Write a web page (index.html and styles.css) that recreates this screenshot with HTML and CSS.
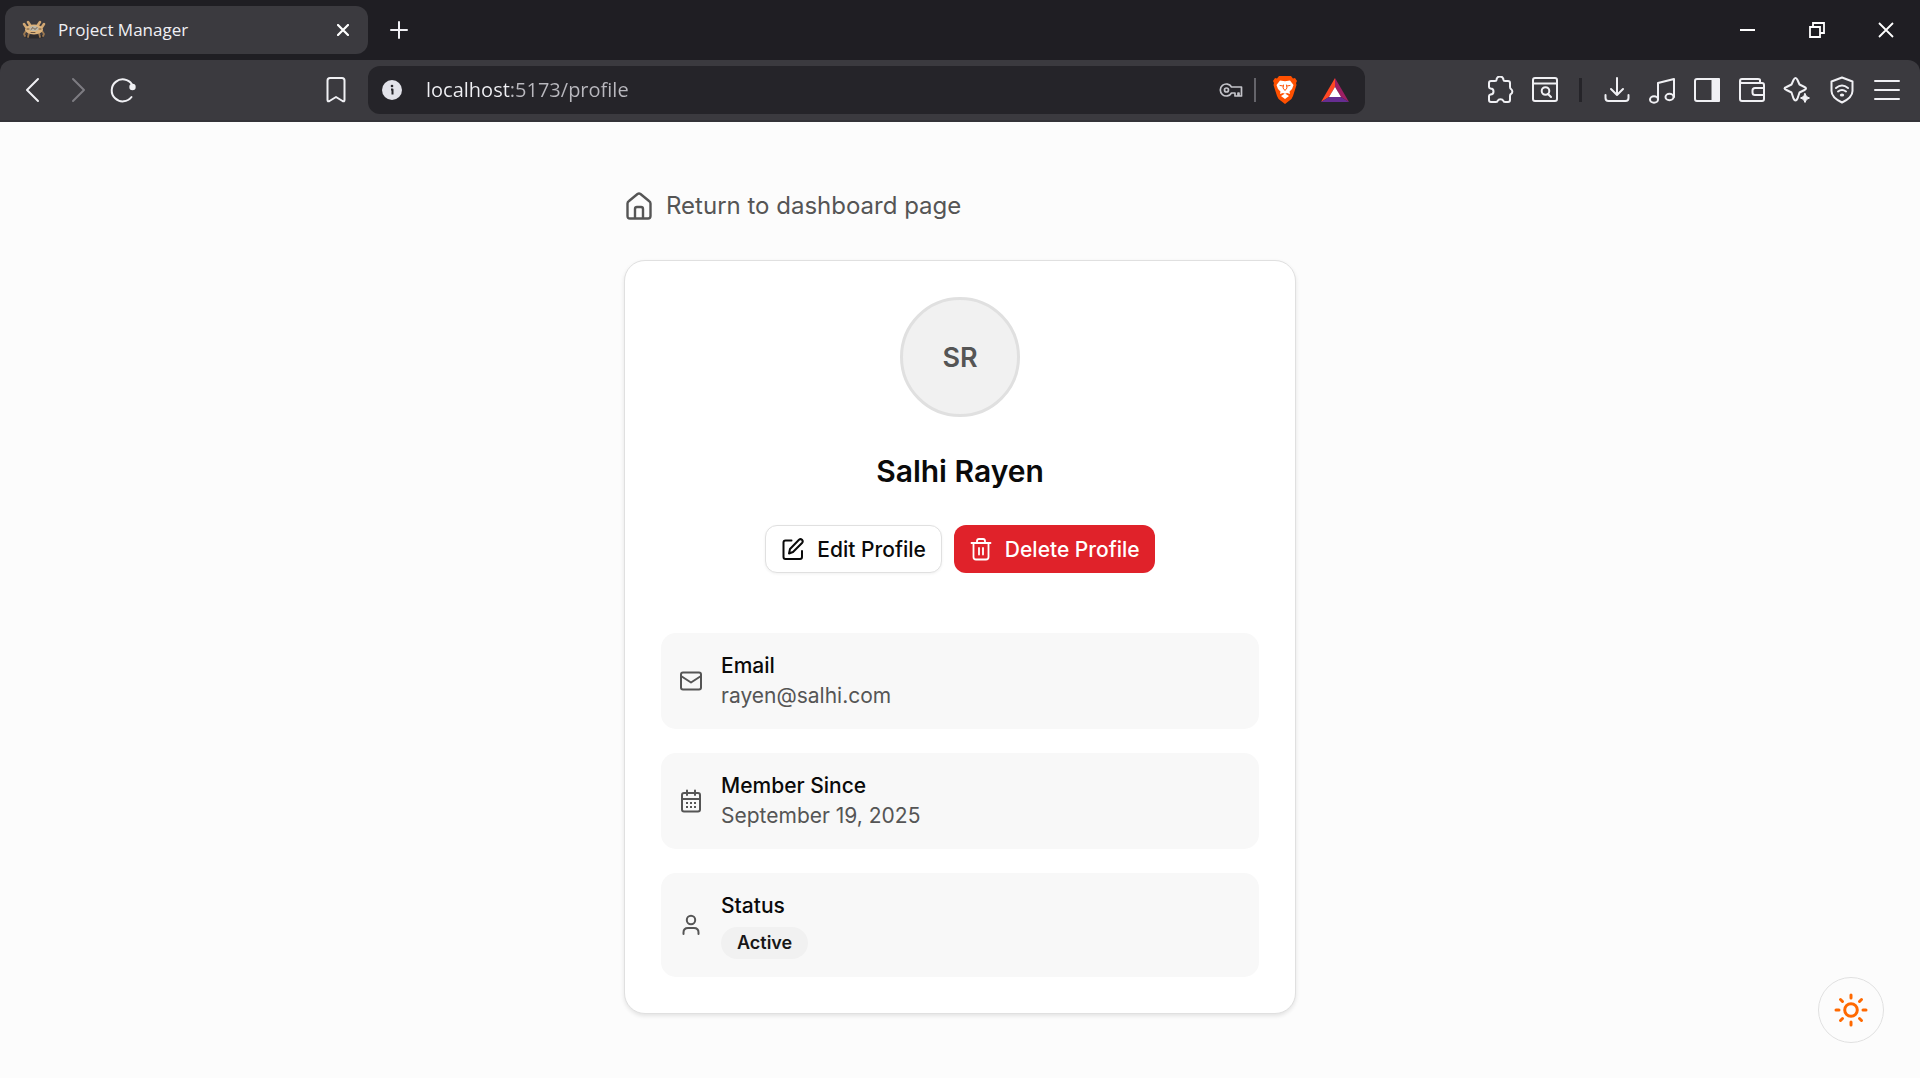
FILE: index.html
```html
<!DOCTYPE html>
<html lang="en">
<head>
<meta charset="utf-8">
<meta name="viewport" content="width=device-width, initial-scale=1">
<title>Project Manager</title>
<link rel="stylesheet" href="styles.css">
</head>
<body>
<div class="window">
  <header class="browser">
    <div class="tabstrip">
      <div class="tab">
        <svg class="favicon" width="24" height="20" viewBox="0 0 24 20" aria-hidden="true">
          <ellipse cx="12" cy="16.500" rx="10" ry="2" fill="#2c2a2c" stroke="none"/>
          <path d="M4 11l-2 3 1 2M20 11l2 3-1 2M7 13l-1 4M17 13l1 4" fill="none" stroke="#9c7850" stroke-width="1.800"/>
          <path d="M4 7L2 4M20 7l2-3M8 5L6 2M16 5l2-3" fill="none" stroke="#d1a773" stroke-width="2.600"/>
          <ellipse cx="12" cy="9.500" rx="9" ry="5" fill="#dcb37c" stroke="none"/>
          <ellipse cx="12" cy="8.500" rx="4.500" ry="2.500" fill="#b9b7ab" stroke="none"/>
          <path d="M9 9.500l2-2 2 2 2-2M5 9h2M17 9h2M9 12.500h4" fill="none" stroke="#6d5540" stroke-width="1"/>
        </svg>
        <span class="tab-title">Project Manager</span>
        <button class="tab-button" aria-label="Close tab"><svg width="12" height="12" viewBox="0 0 12 12"><path d="M1 1l10 10M11 1L1 11" stroke-width="2.200"/></svg></button>
      </div>
      <button class="tab-button" aria-label="New tab"><svg width="18" height="18" viewBox="0 0 18 18"><path d="M9 1v16M1 9h16" stroke-width="2"/></svg></button>
      <div class="window-controls">
        <button aria-label="Minimize"><svg width="16" height="16" viewBox="0 0 16 16"><path d="M0 8h15" stroke-width="2"/></svg></button>
        <button aria-label="Restore"><svg width="16" height="16" viewBox="0 0 16 16"><path d="M1 5h10v10H1zM4 5V1h11v10h-4" stroke-width="1.800" stroke-linejoin="miter"/></svg></button>
        <button aria-label="Close"><svg width="16" height="16" viewBox="0 0 16 16"><path d="M1 1l14 14M15 1L1 15" stroke-width="1.800"/></svg></button>
      </div>
    </div>
    <div class="toolbar">
      <div class="tools">
        <button aria-label="Back"><svg width="28" height="28" viewBox="0 0 28 28"><path d="M19 3L8 14l11 11"/></svg></button>
        <button class="disabled" aria-label="Forward" disabled><svg width="28" height="28" viewBox="0 0 28 28"><path d="M9 3l11 11L9 25"/></svg></button>
        <button aria-label="Reload"><svg width="28" height="28" viewBox="0 0 28 28"><path d="M22.500 21A11 11 0 1 1 23 8.500"/><circle cx="23.500" cy="11" r="3.200" fill="#f0f0f4" stroke="none"/></svg></button>
      </div>
      <div class="space-left"></div>
      <div class="tools">
        <button aria-label="Bookmark this page"><svg width="28" height="28" viewBox="0 0 28 28"><path d="M5.500 24V4.500Q5.500 2 8 2h12q2.500 0 2.500 2.500V24q0 2-2 1L14 21l-6.500 4q-2 1-2-1z"/></svg></button>
      </div>
      <div class="omnibox">
        <svg width="20" height="20" viewBox="0 0 20 20" aria-hidden="true"><circle cx="10" cy="10" r="10" fill="#e2e2e9" stroke="none"/><path d="M9 9.500h1.500v5" stroke="#252429" stroke-linecap="butt"/><circle cx="10" cy="6" r="1.300" fill="#252429" stroke="none"/></svg>
        <input class="address" type="text" value="localhost:5173/profile" aria-label="Address" spellcheck="false">
        <button class="omni-key" aria-label="Passwords"><svg width="24" height="18" viewBox="0 0 24 18"><path d="M12.500 6A6 6 0 1 0 12.500 12H16v3h3v-3h1v3h2.500V6z" stroke="#c3c3c9" stroke-width="1.700"/><circle cx="7.500" cy="9" r="2" stroke="#c3c3c9" stroke-width="1.700"/></svg></button>
        <span class="omni-divider"></span>
        <button class="omni-app" aria-label="Brave Shields"><svg width="24" height="28" viewBox="0 0 24 28"><path d="M6 0h12l2 2.500 2-.5 2 3-1 2 .5 2L20 20q-1 3-3.500 4.500L12 28l-4.500-3.500Q5 23 4 20L.5 9 1 7 0 5l2-3 2 .5z" fill="#ff5000" stroke="none"/><path d="M7 4.500l5 .8 5-.8 3.500 4.500-1.500 4-2.500 2.500.5 2.500-3-1-2 1-2-1-3 1 .5-2.500L5 13 3.500 9zM8 20l4-2.500 4 2.500-4 3z" fill="#fff" stroke="none"/><path d="M7 9.500l3 .5M17 9.500l-3 .5M10.500 9l-.5 3 2 2.500 2-2.500-.5-3" stroke="#ff5000" stroke-width="1"/></svg></button>
        <button class="omni-app" aria-label="Brave Rewards"><svg width="28" height="24" viewBox="0 0 28 24"><path d="M14 0L0 24l8-5 6-10z" fill="#ff4724" stroke="none"/><path d="M14 0l14 24-8-5-6-10z" fill="#9e1f63" stroke="none"/><path d="M0 24h28l-8-5H8z" fill="#662d91" stroke="none"/><path d="M14 9l6 10H8z" fill="#fff" stroke="none"/></svg></button>
      </div>
      <div class="space-right"></div>
      <div class="tools">
        <button aria-label="Extensions"><svg width="28" height="28" viewBox="0 0 28 28"><path d="M9 5q1.500 0 1.500-1a3.500 3.500 0 0 1 7 0q0 1 1.500 1h3q2 0 2 2v4q0 1.500 1 2a3 3 0 0 1 0 5q-1 .5-1 2v4q0 2-2 2h-3q-1.500 0-1.500-1a3.500 3.500 0 0 0-6 0q0 1-1.500 1H5q-2 0-2-2v-4q0-1 1.500-1.500a3 3 0 0 0 0-6Q3 12 3 11V7q0-2 2-2z"/></svg></button>
        <button aria-label="Search tabs"><svg width="28" height="28" viewBox="0 0 28 28"><rect x="2" y="2" width="24" height="23" rx="2"/><path d="M2 7.500h24M17 18l3 3"/><circle cx="14.500" cy="15" r="3.800"/></svg></button>
        <span class="tool-divider"></span>
        <button aria-label="Downloads"><svg width="28" height="28" viewBox="0 0 28 28"><path d="M14 2v17M8 13l6 6 6-6M2.500 19v3q0 3 3 3h17q3 0 3-3v-3"/></svg></button>
        <button aria-label="Media"><svg width="28" height="28" viewBox="0 0 28 28"><path d="M10 23V7l16-4v18"/><ellipse cx="6" cy="23.500" rx="4" ry="3.200"/><ellipse cx="21.500" cy="21" rx="4" ry="3.200"/></svg></button>
        <button aria-label="Side panel"><svg width="28" height="28" viewBox="0 0 28 28"><rect x="2" y="3" width="24" height="22" rx="2"/><path d="M19.500 3H26v22h-6.500z" fill="#f0f0f4"/></svg></button>
        <button aria-label="Wallet"><svg width="28" height="28" viewBox="0 0 28 28"><path d="M22 6V4q0-1-2-1H4Q2 3 2 5v18q0 2 2 2h20q2 0 2-2V9q0-2-2-2H4Q2 7 2 5M26 12h-9q-2.500 0-2.500 2.500v2Q14.500 19 17 19h9"/></svg></button>
        <button aria-label="AI assistant"><svg width="28" height="28" viewBox="0 0 28 28"><path d="M10.500 4q2-4 4 0l2 4.500 5 2.500q3 1.500 0 3l-5 2.500-2 6q-2 4-4 0l-2-6-5-2.500q-4-1.500 0-3l5-2.500z"/><path d="M22 17.500l1.500 3 3 1.500-3 1.500-1.500 3-1.500-3-3-1.500 3-1.500z" fill="#f0f0f4" stroke-width="1"/></svg></button>
        <button aria-label="VPN"><svg width="28" height="28" viewBox="0 0 28 28"><path d="M14 1.500l10.500 4V15q0 6.500-10.500 11.500Q3.500 21.500 3.500 15V5.500zM8 12q6-5 12 0M10 15.500q4-3 8 0"/><ellipse cx="14" cy="19" rx="2.200" ry="1.500" fill="#f0f0f4" stroke="none"/></svg></button>
        <button aria-label="Menu"><svg width="28" height="28" viewBox="0 0 28 28"><path d="M2 5h24M2 14h24M2 23h24"/></svg></button>
      </div>
    </div>
  </header>

  <main class="page">
    <div class="profile">
      <a class="return" href="#dashboard">
        <svg width="28" height="28" viewBox="0 0 28 28" aria-hidden="true"><path d="M2.500 11.500Q2.500 10 4 9l8.500-7q1.500-1 3 0L24 9q1.500 1 1.500 2.500V24q0 2.500-2.500 2.500H5Q2.500 26.500 2.500 24zM10 26V17q0-2 2-2h4q2 0 2 2v9" stroke-width="2.400"/></svg>
        Return to dashboard page
      </a>
      <section class="card">
        <div class="avatar">SR</div>
        <h1 class="name">Salhi Rayen</h1>
        <div class="actions">
          <button class="button edit"><svg width="24" height="24" viewBox="0 0 24 24" aria-hidden="true"><path d="M10.500 3.500H4.500Q2.500 3.500 2.500 5.500V20q0 2 2 2H19q2 0 2-2v-6M8 16.500l1-4.500 9-9.200q1.500-1.300 3 0 1.500 1.600 0 3.200L12 15z"/></svg>Edit Profile</button>
          <button class="button delete"><svg width="24" height="24" viewBox="0 0 24 24" aria-hidden="true"><path d="M2.500 6h19M8 6V4q0-2 2-2h4q2 0 2 2v2M4.500 6v14q0 2.500 2.500 2.500h10q2.500 0 2.500-2.500V6M10 11v6.500M14 11v6.500" stroke-width="1.800"/></svg>Delete Profile</button>
        </div>
        <dl class="details">
          <div class="detail">
            <svg width="24" height="24" viewBox="0 0 24 24" aria-hidden="true"><rect x="2" y="3.500" width="20" height="17" rx="2"/><path d="M2 7l10 6.500L22 7"/></svg>
            <div><dt>Email</dt><dd>rayen@salhi.com</dd></div>
          </div>
          <div class="detail">
            <svg width="24" height="24" viewBox="0 0 24 24" aria-hidden="true"><rect x="3" y="4" width="18" height="18.500" rx="2"/><path d="M3 10h18M8 1.500V6M16 1.500V6"/><path d="M7 14h2M11 14h2M15 14h2M7 18h2M11 18h2M15 18h2" stroke-linecap="butt"/></svg>
            <div><dt>Member Since</dt><dd>September 19, 2025</dd></div>
          </div>
          <div class="detail">
            <svg width="24" height="24" viewBox="0 0 24 24" aria-hidden="true"><circle cx="12" cy="7" r="4.200"/><path d="M4.500 21v-1.500Q4.500 15 9 15h6q4.500 0 4.500 4.500V21"/></svg>
            <div><dt>Status</dt><dd class="status"><span class="badge">Active</span></dd></div>
          </div>
        </dl>
      </section>
    </div>
  </main>
  <button class="theme" aria-label="Toggle theme"><svg width="36" height="36" viewBox="0 0 36 36"><circle cx="18" cy="18" r="6.300"/><path d="M18 3v3M18 30v3M3 18h3M30 18h3M7.500 7.500l2 2M26.500 26.500l2 2M7.500 28.500l2-2M26.500 9.500l2-2"/></svg></button>
</div>
</body>
</html>
```
FILE: styles.css
```css
* { box-sizing: border-box; }

body {
  margin: 0;
  background: #fcfcfc;
  color: #0a0a0a;
  font-family: Inter, "Liberation Sans", sans-serif;
}

button, input { font: inherit; color: inherit; }

button {
  display: flex;
  align-items: center;
  justify-content: center;
  padding: 0;
  border: 0;
  background: none;
  cursor: pointer;
}

svg {
  flex: none;
  fill: none;
  stroke: currentColor;
  stroke-width: 2;
  stroke-linecap: round;
  stroke-linejoin: round;
}

h1, dl, dt, dd { margin: 0; }

.window {
  display: flex;
  flex-direction: column;
  min-height: 100vh;
}

/* Browser frame */
.browser {
  background: #1f1e23;
  color: #f0f0f4;
  font-family: "Open Sans", "Noto Sans", sans-serif;
}

.tabstrip {
  display: flex;
  align-items: center;
  height: 60px;
  padding-left: 5px;
}

.tab {
  display: flex;
  align-items: center;
  width: 363px;
  height: 48px;
  padding: 0 10px 0 17px;
  border-radius: 12px;
  background: #3b3a3f;
}

.favicon { margin-right: 12px; }

.tab-title {
  flex: 1;
  font-size: 17px;
  line-height: 24px;
}

.tab-button { width: 30px; height: 30px; }
.tab > .tab-button { color: #fff; }
.tabstrip > .tab-button { margin-left: 16px; }

.window-controls {
  display: flex;
  margin-left: auto;
  color: #fff;
}

.window-controls button { width: 69px; height: 58px; }
.window-controls svg { stroke-linecap: butt; }

.toolbar {
  display: flex;
  align-items: center;
  height: 62px;
  padding: 0 11px 0 10px;
  border-bottom: 2px solid #343338;
  border-radius: 12px 12px 0 0;
  background: #3b3a3f;
}

.tools { display: flex; align-items: center; }
.tools button { width: 45px; height: 45px; }
.tools .disabled { color: #7d7c82; }

.space-left { flex: 3; }
.space-right { flex: 2; }

.tool-divider {
  width: 3px;
  height: 24px;
  margin: 0 12px;
  background: #252429;
}

.omnibox {
  display: flex;
  align-items: center;
  width: 52.5%;
  height: 48px;
  margin-left: 10px;
  padding: 0 16px 0 14px;
  border-radius: 12px;
  background: #252429;
}

.address {
  flex: 1;
  min-width: 0;
  margin: 0 24px;
  padding: 0;
  border: 0;
  outline: 0;
  background: linear-gradient(90deg, #f0f0f4 84px, #b9b8be 84px);
  background-clip: text;
  -webkit-text-fill-color: transparent;
  font-size: 20px;
  line-height: 30px;
}

.omni-divider {
  width: 2px;
  height: 24px;
  margin: 0 17px 0 11px;
  background: #65646a;
}

.omni-app + .omni-app { margin-left: 24px; }

/* Profile page */
.page {
  display: flex;
  justify-content: center;
  flex: 1;
  padding: 66px 24px 48px;
}

.profile {
  display: flex;
  flex-direction: column;
  align-items: flex-start;
  gap: 36px;
  width: 100%;
  max-width: 672px;
}

.return {
  display: flex;
  align-items: center;
  gap: 13px;
  padding-left: 1px;
  color: #555;
  font-size: 24px;
  line-height: 36px;
  text-decoration: none;
}

.card {
  display: flex;
  flex-direction: column;
  align-items: center;
  width: 100%;
  padding: 36px;
  border: 1px solid #e0e0e0;
  border-radius: 21px;
  background: #fff;
  box-shadow: 0 2px 4px rgb(0 0 0 / 10%);
}

.avatar {
  display: flex;
  align-items: center;
  justify-content: center;
  width: 120px;
  height: 120px;
  border: 3px solid #e0e0e0;
  border-radius: 50%;
  background: #f1f1f1;
  color: #555;
  font-size: 27px;
  font-weight: 600;
}

.name {
  margin-top: 36px;
  font-size: 30px;
  font-weight: 600;
  line-height: 36px;
}

.actions {
  display: flex;
  gap: 12px;
  margin-top: 36px;
}

.button {
  gap: 12px;
  height: 48px;
  padding: 0 15px;
  border-radius: 12px;
  font-size: 21px;
  font-weight: 500;
}

.edit {
  border: 1px solid #e0e0e0;
  background: #fff;
  box-shadow: 0 1px 3px rgb(0 0 0 / 6%);
}

.delete {
  background: #e0222a;
  color: #fff;
}

.details {
  display: flex;
  flex-direction: column;
  gap: 24px;
  width: 100%;
  margin-top: 60px;
}

.detail {
  display: flex;
  align-items: center;
  gap: 18px;
  padding: 18px;
  border-radius: 15px;
  background: #f8f8f8;
  font-size: 21px;
  line-height: 30px;
}

.detail svg { color: #555; }
.detail dt { font-weight: 500; }
.detail dd { color: #555; }
.detail .status { padding-top: 6px; }

.badge {
  display: block;
  padding: 1px 16px;
  border-radius: 16px;
  background: #f1f1f1;
  color: #171717;
  font-size: 18px;
  font-weight: 600;
}

.theme {
  position: fixed;
  right: 36px;
  bottom: 35px;
  width: 66px;
  height: 66px;
  border: 1px solid #e0e0e0;
  border-radius: 50%;
  color: #ff6900;
}

.theme svg { stroke-width: 3; }
```
